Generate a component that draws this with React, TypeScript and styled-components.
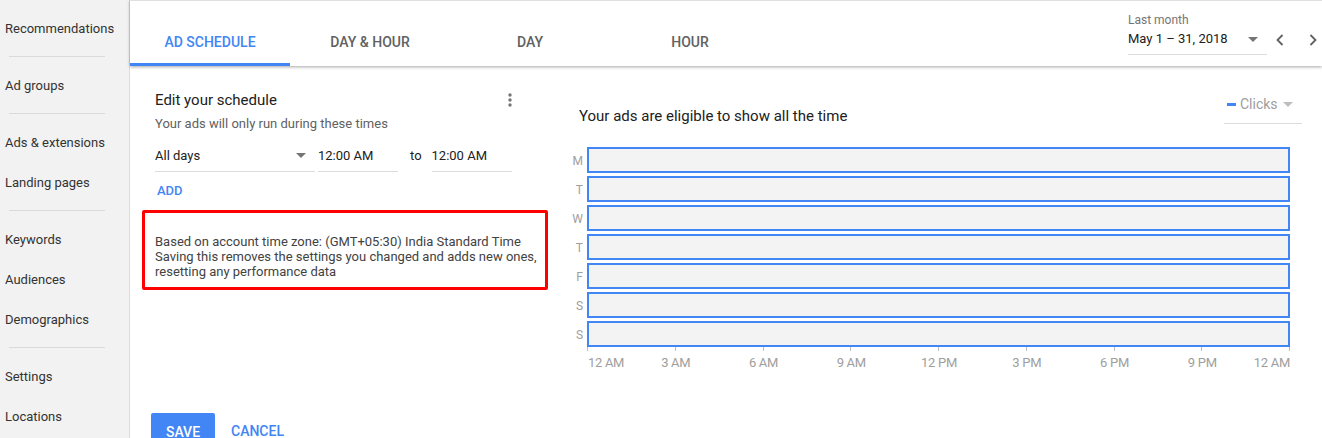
import React from "react";
import styled, { createGlobalStyle } from "styled-components";

const Global = createGlobalStyle`
  html, body { margin: 0; padding: 0; background: #fff; }
  body { font-family: Roboto, "Noto Sans", Arial, sans-serif; overflow: hidden; }
  * { box-sizing: border-box; }
`;

const BLUE = "#4285f4";

const Page = styled.div`
  display: flex;
  width: 1322px;
  height: 438px;
  overflow: hidden;
`;

const Sidebar = styled.nav`
  width: 130px;
  flex: none;
  background: #f2f2f2;
  border-right: 1px solid #dcdcdc;
  padding-top: 8px;
  display: flex;
  flex-direction: column;
`;

const NavItem = styled.div`
  height: 40px;
  display: flex;
  align-items: center;
  padding-left: 5px;
  font-size: 13px;
  color: #333;
`;

const NavDivider = styled.div`
  height: 1px;
  width: 96px;
  margin: 8px 0 8px 9px;
  background: #dadada;
`;

const Main = styled.div`
  flex: 1;
  display: flex;
  flex-direction: column;
  min-width: 0;
`;

const Header = styled.header`
  height: 66px;
  flex: none;
  display: flex;
  align-items: stretch;
  border-top: 1px solid #e0e0e0;
  box-shadow: 0 1px 3px rgba(0, 0, 0, 0.35);
  position: relative;
  z-index: 1;
  background: #fff;
`;

const Tab = styled.div<{ $active?: boolean }>`
  width: 160px;
  display: flex;
  align-items: center;
  justify-content: center;
  padding-top: 19px;
  font-size: 14px;
  font-weight: 500;
  color: ${(p) => (p.$active ? BLUE : "#616161")};
  border-bottom: 3px solid ${(p) => (p.$active ? BLUE : "transparent")};
`;

const Spacer = styled.div`
  flex: 1;
`;

const DatePicker = styled.div`
  display: flex;
  align-items: flex-start;
  padding-top: 11px;
  padding-right: 4px;
`;

const DateField = styled.div`
  width: 139px;
  border-bottom: 1px solid #dcdcdc;
  height: 43px;
  display: flex;
  flex-direction: column;
`;

const DateLabel = styled.div`
  font-size: 12px;
  color: #757575;
  line-height: 16px;
`;

const DateValueRow = styled.div`
  display: flex;
  align-items: center;
  justify-content: space-between;
  margin-top: 2px;
  font-size: 13px;
  color: #212121;
  line-height: 18px;
`;

const Caret = styled.span<{ $color?: string }>`
  width: 0;
  height: 0;
  border-left: 5px solid transparent;
  border-right: 5px solid transparent;
  border-top: 5px solid ${(p) => p.$color || "#757575"};
  margin-right: 9px;
`;

const NavArrows = styled.div`
  display: flex;
  gap: 25px;
  margin-left: 9px;
  margin-right: 1px;
  margin-top: 22px;
  color: #616161;
`;

const Body = styled.div`
  flex: 1;
  display: flex;
  min-height: 0;
`;

const EditPanel = styled.section`
  width: 420px;
  flex: none;
  padding: 24px 0 0 12px;
  display: flex;
  flex-direction: column;
`;

const EditInner = styled.div`
  padding-left: 13px;
  width: 370px;
`;

const TitleRow = styled.div`
  display: flex;
  justify-content: space-between;
  align-items: center;
`;

const PanelTitle = styled.div`
  font-size: 15px;
  line-height: 20px;
  color: #212121;
`;

const Subtitle = styled.div`
  font-size: 13px;
  color: #616161;
  line-height: 18px;
  margin-top: 5px;
`;

const FieldRow = styled.div`
  display: flex;
  align-items: flex-end;
  margin-top: 9px;
`;

const Field = styled.div<{ $w: number }>`
  width: ${(p) => p.$w}px;
  height: 30px;
  border-bottom: 1px solid #dcdcdc;
  display: flex;
  align-items: center;
  justify-content: space-between;
  font-size: 13px;
  color: #212121;
  padding-bottom: 3px;
`;

const ToLabel = styled.div`
  font-size: 13px;
  color: #212121;
  height: 30px;
  display: flex;
  align-items: center;
  padding-bottom: 3px;
  margin: 0 10px 0 12px;
`;

const LinkButton = styled.button<{ $size?: number }>`
  background: none;
  border: none;
  padding: 0;
  font-family: inherit;
  font-size: ${(p) => p.$size || 13}px;
  font-weight: 500;
  color: ${BLUE};
  text-align: left;
`;

const AddRow = styled.div`
  margin-top: 9px;
  padding-left: 2px;
  line-height: 18px;
`;

const Notice = styled.div`
  margin-top: 11px;
  width: 406px;
  height: 80px;
  border: 3px solid #ff0000;
  border-radius: 2px;
  padding: 21px 0 0 10px;
  font-size: 13px;
  line-height: 15px;
  color: #424242;
`;

const Actions = styled.div`
  margin-top: auto;
  display: flex;
  align-items: center;
  gap: 16px;
  padding-left: 9px;
  margin-bottom: -11px;
`;

const PrimaryButton = styled.button`
  width: 64px;
  height: 36px;
  border: none;
  border-radius: 2px;
  background: ${BLUE};
  color: #fff;
  font-family: inherit;
  font-size: 14px;
  font-weight: 500;
  padding-top: 2px;
`;

const ChartPanel = styled.section`
  flex: 1;
  padding: 23px 20px 0 15px;
  display: flex;
  flex-direction: column;
`;

const ChartTop = styled.div`
  display: flex;
  justify-content: space-between;
  align-items: flex-start;
`;

const ChartTitle = styled.div`
  margin: 17px 0 0 14px;
  font-size: 15px;
  line-height: 20px;
  color: #212121;
`;

const MetricSelect = styled.div`
  width: 78px;
  height: 35px;
  border-bottom: 1px solid #dcdcdc;
  display: flex;
  align-items: center;
  padding: 0 0 4px 3px;
  font-size: 14px;
  color: #9e9e9e;
`;

const MetricSwatch = styled.span`
  width: 9px;
  height: 3px;
  background: ${BLUE};
  margin-right: 4px;
`;

const MetricLabel = styled.span`
  flex: 1;
`;

const Grid = styled.div`
  margin-top: 21px;
  display: grid;
  grid-template-columns: 18px 703px;
  column-gap: 4px;
  row-gap: 3px;
`;

const DayLabel = styled.div`
  font-size: 12px;
  color: #9e9e9e;
  display: flex;
  align-items: center;
  justify-content: flex-end;
  padding-top: 1px;
`;

const DayBar = styled.div`
  height: 26px;
  border: 2px solid ${BLUE};
  background: #f3f3f3;
`;

const Axis = styled.div`
  grid-column: 2;
  position: relative;
  height: 24px;
  margin-top: -3px;
`;

const Tick = styled.span`
  position: absolute;
  top: 0;
  width: 1px;
  height: 4px;
  background: #bdbdbd;
`;

const TickLabel = styled.span<{ $align: "start" | "center" | "end" }>`
  position: absolute;
  top: 8px;
  font-size: 13px;
  color: #9e9e9e;
  white-space: nowrap;
  letter-spacing: -0.3px;
  transform: ${(p) =>
    p.$align === "start" ? "none" : p.$align === "end" ? "translateX(-100%)" : "translateX(-50%)"};
`;

const Chevron = ({ dir }: { dir: "left" | "right" }) => (
  <svg width="8" height="12" viewBox="0 0 8 12">
    <path
      d={dir === "left" ? "M6.5 1 L1.5 6 L6.5 11" : "M1.5 1 L6.5 6 L1.5 11"}
      fill="none"
      stroke="#616161"
      strokeWidth="1.8"
    />
  </svg>
);

const MoreIcon = () => (
  <svg width="4" height="14" viewBox="0 0 4 14">
    <circle cx="2" cy="2" r="1.7" fill="#757575" />
    <circle cx="2" cy="7" r="1.7" fill="#757575" />
    <circle cx="2" cy="12" r="1.7" fill="#757575" />
  </svg>
);

const navGroups = [
  ["Recommendations"],
  ["Ad groups"],
  ["Ads & extensions", "Landing pages"],
  ["Keywords", "Audiences", "Demographics"],
  ["Settings", "Locations"],
];

const tabs = ["AD SCHEDULE", "DAY & HOUR", "DAY", "HOUR"];
const days = ["M", "T", "W", "T", "F", "S", "S"];
const hours = ["12 AM", "3 AM", "6 AM", "9 AM", "12 PM", "3 PM", "6 PM", "9 PM", "12 AM"];

export default function App() {
  return (
    <>
      <Global />
      <Page>
        <Sidebar>
          {navGroups.map((g, gi) => (
            <React.Fragment key={gi}>
              {gi > 0 && <NavDivider />}
              {g.map((item) => (
                <NavItem key={item}>{item}</NavItem>
              ))}
            </React.Fragment>
          ))}
        </Sidebar>
        <Main>
          <Header>
            {tabs.map((t, i) => (
              <Tab key={t} $active={i === 0}>
                {t}
              </Tab>
            ))}
            <Spacer />
            <DatePicker>
              <DateField>
                <DateLabel>Last month</DateLabel>
                <DateValueRow>
                  <span>May 1 – 31, 2018</span>
                  <Caret />
                </DateValueRow>
              </DateField>
              <NavArrows>
                <Chevron dir="left" />
                <Chevron dir="right" />
              </NavArrows>
            </DatePicker>
          </Header>
          <Body>
            <EditPanel>
              <EditInner>
                <TitleRow>
                  <PanelTitle>Edit your schedule</PanelTitle>
                  <MoreIcon />
                </TitleRow>
                <Subtitle>Your ads will only run during these times</Subtitle>
                <FieldRow>
                  <Field $w={160} style={{ marginRight: 3 }}>
                    <span>All days</span>
                    <Caret />
                  </Field>
                  <Field $w={80}>
                    <span>12:00 AM</span>
                  </Field>
                  <ToLabel>to</ToLabel>
                  <Field $w={80}>
                    <span>12:00 AM</span>
                  </Field>
                </FieldRow>
                <AddRow>
                  <LinkButton>ADD</LinkButton>
                </AddRow>
              </EditInner>
              <Notice>
                Based on account time zone: (GMT+05:30) India Standard Time
                <br />
                Saving this removes the settings you changed and adds new ones,
                <br />
                resetting any performance data
              </Notice>
              <Actions>
                <PrimaryButton>SAVE</PrimaryButton>
                <LinkButton $size={14}>CANCEL</LinkButton>
              </Actions>
            </EditPanel>
            <ChartPanel>
              <ChartTop>
                <ChartTitle>Your ads are eligible to show all the time</ChartTitle>
                <MetricSelect>
                  <MetricSwatch />
                  <MetricLabel>Clicks</MetricLabel>
                  <Caret $color="#bdbdbd" />
                </MetricSelect>
              </ChartTop>
              <Grid>
                {days.map((d, i) => (
                  <React.Fragment key={i}>
                    <DayLabel>{d}</DayLabel>
                    <DayBar />
                  </React.Fragment>
                ))}
                <Axis>
                  {hours.map((h, i) => {
                    const left = (i * 702) / 8;
                    const align = i === 0 ? "start" : i === hours.length - 1 ? "end" : "center";
                    return (
                      <React.Fragment key={i}>
                        <Tick style={{ left }} />
                        <TickLabel $align={align} style={{ left: left + 1 }}>
                          {h}
                        </TickLabel>
                      </React.Fragment>
                    );
                  })}
                </Axis>
              </Grid>
            </ChartPanel>
          </Body>
        </Main>
      </Page>
    </>
  );
}
